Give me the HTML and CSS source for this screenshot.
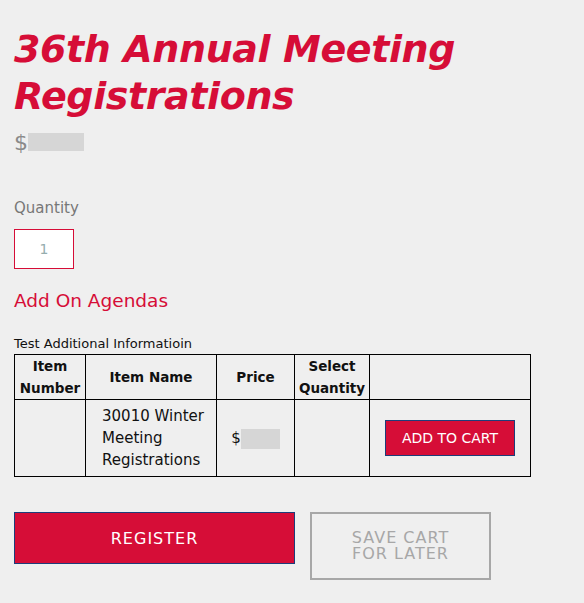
FILE: index.html
```html
<!DOCTYPE html>
<html lang="en">
<head>
    <meta charset="UTF-8">
    <meta name="viewport" content="width=device-width, initial-scale=1.0">
    <title>36th Annual Meeting Registrations</title>
    <link rel="stylesheet" href="styles.css">
</head>
<body>
    <div class="product">
        <h1 class="product-title">36th Annual Meeting Registrations</h1>
        <div class="product-price">$<span class="blurred blurred-lg"></span></div>

        <form class="product-form">
            <label for="qty" class="qty-label">Quantity</label>
            <input type="text" id="qty" class="qty-input" value="1">

            <h3 class="addon-title">Add On Agendas</h3>
            <div class="addon-info">Test Additional Informatioin</div>
            <table class="addon-table">
                <colgroup>
                    <col class="col-num">
                    <col class="col-name">
                    <col class="col-price">
                    <col class="col-qty">
                    <col class="col-action">
                </colgroup>
                <thead>
                    <tr>
                        <th>Item Number</th>
                        <th>Item Name</th>
                        <th>Price</th>
                        <th>Select Quantity</th>
                        <th></th>
                    </tr>
                </thead>
                <tbody>
                    <tr>
                        <td></td>
                        <td class="item-name">30010 Winter Meeting Registrations</td>
                        <td class="item-price">$<span class="blurred blurred-sm"></span></td>
                        <td></td>
                        <td><button type="button" class="btn-cart">ADD TO CART</button></td>
                    </tr>
                </tbody>
            </table>

            <div class="form-actions">
                <button type="submit" class="btn-register">REGISTER</button>
                <button type="button" class="btn-save">SAVE CART<br>FOR LATER</button>
            </div>
        </form>
    </div>
</body>
</html>
```

FILE: styles.css
```css
body {
    font-family: "DejaVu Sans", sans-serif;
    background-color: #efefef;
    margin: 0;
    color: #111;
}
.product {
    padding: 26px 14px 0 14px;
}
.product-title {
    margin: 0;
    font-size: 38px;
    line-height: 47px;
    font-weight: bold;
    font-style: italic;
    color: #d60d37;
    letter-spacing: -0.4px;
}
.product-price {
    display: flex;
    align-items: center;
    margin-top: 10px;
    font-size: 22px;
    color: #8a8a8a;
    height: 24px;
}
.blurred {
    display: inline-block;
    background-color: #d6d6d6;
}
.blurred-lg {
    width: 56px;
    height: 18px;
}
.blurred-sm {
    width: 39px;
    height: 20px;
}
.product-form {
    margin-top: 45px;
}
.qty-label {
    display: block;
    font-size: 15px;
    color: #777;
    margin-bottom: 12px;
}
.qty-input {
    box-sizing: border-box;
    display: block;
    width: 60px;
    height: 40px;
    padding: 0;
    border: 1px solid #d60d37;
    background: #fff;
    text-align: center;
    font-family: inherit;
    font-size: 14px;
    color: #95adad;
    outline: none;
}
.addon-title {
    margin: 21px 0 0 0;
    font-size: 18.5px;
    font-weight: normal;
    color: #d60d37;
}
.addon-info {
    margin-top: 25px;
    font-size: 13px;
    color: #111;
}
.addon-table {
    border-collapse: collapse;
    table-layout: fixed;
    width: 516px;
    margin-top: 3px;
}
.col-num { width: 71px; }
.col-name { width: 131px; }
.col-price { width: 78px; }
.col-qty { width: 75px; }
.col-action { width: 161px; }
.addon-table th,
.addon-table td {
    border: 1px solid #000;
    padding: 0;
    text-align: center;
}
.addon-table th {
    height: 44px;
    font-size: 13.5px;
    line-height: 22px;
    font-weight: bold;
}
.addon-table td {
    height: 76px;
    font-size: 15px;
    line-height: 22px;
}
.addon-table td.item-name {
    text-align: left;
    padding-left: 16px;
}
.item-price .blurred {
    vertical-align: middle;
}
.btn-cart {
    width: 130px;
    height: 36px;
    background-color: #d60d37;
    border: 1px solid #1d3d7a;
    color: #fff;
    font-family: inherit;
    font-size: 14px;
    cursor: pointer;
}
.form-actions {
    display: flex;
    align-items: flex-start;
    gap: 15px;
    margin-top: 35px;
}
.btn-register {
    width: 281px;
    height: 52px;
    background-color: #d60d37;
    border: 1px solid #1d3d7a;
    color: #fff;
    font-family: inherit;
    font-size: 16px;
    letter-spacing: 1px;
    cursor: pointer;
}
.btn-save {
    width: 181px;
    height: 68px;
    background: transparent;
    border: 2px solid #a7a7a7;
    color: #a7a7a7;
    font-family: inherit;
    font-size: 16px;
    line-height: 16px;
    letter-spacing: 1px;
    cursor: pointer;
}
```
